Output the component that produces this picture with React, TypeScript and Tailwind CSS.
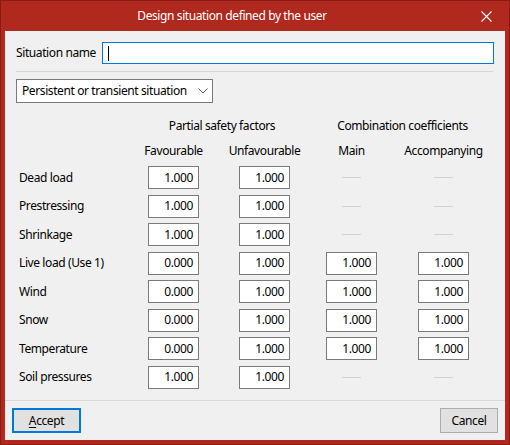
import React from "react";

const rows: { label: string; fav: string; unfav: string; main?: string; acc?: string }[] = [
  { label: "Dead load", fav: "1.000", unfav: "1.000" },
  { label: "Prestressing", fav: "1.000", unfav: "1.000" },
  { label: "Shrinkage", fav: "1.000", unfav: "1.000" },
  { label: "Live load (Use 1)", fav: "0.000", unfav: "1.000", main: "1.000", acc: "1.000" },
  { label: "Wind", fav: "0.000", unfav: "1.000", main: "1.000", acc: "1.000" },
  { label: "Snow", fav: "0.000", unfav: "1.000", main: "1.000", acc: "1.000" },
  { label: "Temperature", fav: "0.000", unfav: "1.000", main: "1.000", acc: "1.000" },
  { label: "Soil pressures", fav: "1.000", unfav: "1.000" },
];

const cols = "grid grid-cols-[129px_51px_40px_51px_36px_51px_41px_51px]";

function NumBox({ value }: { value: string }) {
  return (
    <div className="h-[23px] w-[51px] border border-[#7a7a7a] bg-white flex items-center justify-end pr-[5px] leading-none text-black">
      {value}
    </div>
  );
}

function Dash() {
  return (
    <div className="h-[23px] flex items-center justify-center">
      <div className="h-px w-[19px] bg-[#d2d2d2]" />
    </div>
  );
}

export default function App() {
  return (
    <div
      className="w-[510px] h-[445px] bg-[#b0291f] border border-[#8b1a13] flex flex-col select-none tracking-[-0.4px]"
      style={{ fontFamily: '"Noto Sans", "Liberation Sans", sans-serif' }}
    >
      {/* Title bar */}
      <div className="h-[30px] flex items-center text-white">
        <div className="flex-1 text-center text-[12px] whitespace-nowrap">Design situation defined by the user</div>
        <div className="w-[46px] h-full flex items-center justify-center">
          <svg width="11" height="11" viewBox="0 0 11 11">
            <path d="M0.5 0.5 L10.5 10.5 M10.5 0.5 L0.5 10.5" stroke="#ffffff" strokeWidth="1.1" />
          </svg>
        </div>
      </div>

      {/* Body */}
      <div className="mx-[4px] mb-[4px] flex-1 bg-[#f0f0f0] flex flex-col text-[12px] text-black">
        <div className="mt-[11px] mx-[11px] h-[22px] flex items-center">
          <span className="w-[86px] whitespace-nowrap">Situation name</span>
          <div className="flex-1 h-[22px] border border-[#0078d7] bg-white flex items-center pl-[5px]">
            <div className="w-px h-[15px] bg-black" />
          </div>
        </div>

        <div className="mt-[7px] ml-[11px] mr-[12px] h-px bg-[#d5d5d5]" />

        <div className="mt-[7px] ml-[11px] w-[197px] h-[24px] border border-[#7a7a7a] bg-white flex items-center justify-between pl-[5px] pr-[4px]">
          <span className="whitespace-nowrap">Persistent or transient situation</span>
          <svg width="10" height="6" viewBox="0 0 10 6">
            <path d="M0.5 0.5 L5 5 L9.5 0.5" fill="none" stroke="#606060" strokeWidth="1" />
          </svg>
        </div>

        {/* Group headers */}
        <div className={`${cols} mt-[15px] ml-[14px] h-[16px] leading-[16px]`}>
          <div />
          <div className="col-span-3 text-center pl-[6px] whitespace-nowrap">Partial safety factors</div>
          <div />
          <div className="col-span-3 text-center pl-[10px] whitespace-nowrap">Combination coefficients</div>
        </div>

        <div className={`${cols} mt-[9px] ml-[14px] h-[16px] leading-[16px]`}>
          <div />
          <div className="flex justify-center whitespace-nowrap">Favourable</div>
          <div />
          <div className="flex justify-center whitespace-nowrap">Unfavourable</div>
          <div />
          <div className="flex justify-center whitespace-nowrap">Main</div>
          <div />
          <div className="flex justify-center whitespace-nowrap">Accompanying</div>
        </div>

        <div className="mt-[7px] ml-[14px] flex flex-col">
          {rows.map((r) => (
            <div key={r.label} className={`${cols} h-[28.57px] items-start`}>
              <div className="h-[23px] flex items-center whitespace-nowrap">{r.label}</div>
              <NumBox value={r.fav} />
              <div />
              <NumBox value={r.unfav} />
              <div />
              {r.main ? <NumBox value={r.main} /> : <Dash />}
              <div />
              {r.acc ? <NumBox value={r.acc} /> : <Dash />}
            </div>
          ))}
        </div>

        {/* Footer */}
        <div className="mt-auto border-t border-[#d9d9d9] h-[40px] flex justify-between items-start pt-[7px] px-[7px]">
          <button className="h-[25px] w-[69px] border-2 border-[#0078d7] bg-[#e1e1e1] flex items-center justify-center">
            <span>
              <span className="underline underline-offset-2">A</span>ccept
            </span>
          </button>
          <button className="h-[25px] w-[58px] border border-[#adadad] bg-[#e1e1e1] flex items-center justify-center">
            Cancel
          </button>
        </div>
      </div>
    </div>
  );
}
